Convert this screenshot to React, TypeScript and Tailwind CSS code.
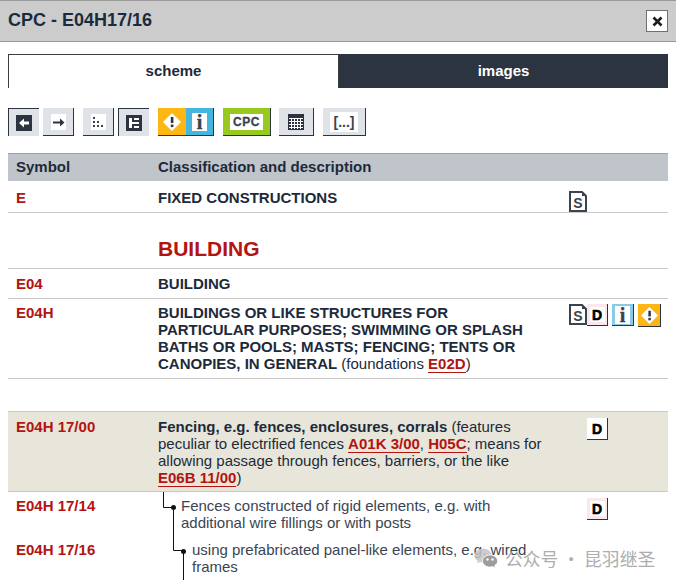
const font = "font-['Liberation_Sans',Arial,sans-serif]";

function ToolButton({ pressed, className, children }: { pressed?: boolean; className?: string; children: React.ReactNode }) {
  const edge = pressed
    ? 'border-t-[1.5px] border-l-[1.5px] border-t-[#2b3440] border-l-[#2b3440]'
    : 'pt-[1px] border-b-[1.5px] border-r-[1.5px] border-b-[#2b3440] border-r-[#2b3440]';
  return (
    <div className={`h-[28px] flex items-center justify-center bg-[#dfe2e6] ${edge} ${className ?? ''}`}>
      {children}
    </div>
  );
}

function Warning({ size = 18 }: { size?: number }) {
  return (
    <svg width={size} height={size} viewBox="0 0 18 18">
      <path d="M9 0 18 9 9 18 0 9Z" fill="#fff" />
      <rect x="7.8" y="4" width="2.6" height="6" fill="#2b3440" />
      <rect x="7.8" y="11.5" width="2.6" height="2.6" fill="#2b3440" />
    </svg>
  );
}

function InfoGlyph() {
  return (
    <span className="flex w-[15px] h-[18px] items-center justify-center bg-white text-[#3a434e] font-['Liberation_Serif',serif] font-bold text-[20px] leading-none [-webkit-text-stroke:0.4px_#3a434e]">
      i
    </span>
  );
}

function Toolbar() {
  return (
    <div className="flex mt-[20px] ml-[8px] h-[28px]">
      <ToolButton pressed className="w-[31px]">
        <svg width="16" height="16" viewBox="0 0 16 16">
          <rect width="16" height="16" fill="#2b3440" />
          <path d="M13 6.6H8V3.5L3 8 8 12.5V9.4H13Z" fill="#fff" />
        </svg>
      </ToolButton>
      <ToolButton className="w-[31px] ml-[4px]">
        <span className="flex w-[15px] h-[16px] items-center justify-center bg-white">
          <svg width="13" height="11" viewBox="0 0 13 11">
            <path d="M1 4.6H8V1.5L12.5 5.5 8 9.5V6.4H1Z" fill="#2b3440" />
          </svg>
        </span>
      </ToolButton>
      <ToolButton className="w-[31px] ml-[9px]">
        <span className="flex w-[15px] h-[16px] items-center justify-center bg-white">
          <svg width="12" height="12" viewBox="0 0 12 12" fill="#3a4450">
            <rect x="1" y="1" width="2" height="2" />
            <rect x="1" y="5" width="2" height="2" />
            <rect x="1" y="9" width="2" height="2" />
            <rect x="5" y="5" width="2" height="2" />
            <rect x="5" y="9" width="2" height="2" />
            <rect x="9" y="9" width="2" height="2" />
          </svg>
        </span>
      </ToolButton>
      <ToolButton pressed className="w-[31px] ml-[4px]">
        <svg width="16" height="16" viewBox="0 0 16 16">
          <rect width="16" height="16" fill="#2b3440" />
          <path d="M3 3H6V7H13V9H6V13H3Z" fill="#fff" />
          <rect x="8" y="3" width="5" height="2" fill="#fff" />
          <rect x="8" y="11" width="5" height="2" fill="#fff" />
        </svg>
      </ToolButton>
      <div className="flex ml-[9px] h-[28px] border-b-[1.5px] border-b-[#2b3440]">
        <span className="flex w-[28px] items-center justify-center bg-[#fdb714]">
          <Warning />
        </span>
        <span className="flex w-[28px] items-center justify-center bg-[#45b5de] border-r-[1.5px] border-r-[#2b3440]">
          <InfoGlyph />
        </span>
      </div>
      <div className="flex ml-[9px] w-[48px] h-[28px] pt-[1px] items-center justify-center bg-[#97c91f] border-b-[1.5px] border-r-[1.5px] border-b-[#2b3440] border-r-[#2b3440]">
        <span className="flex w-[33px] h-[16px] items-center justify-center bg-white text-[#3a4450] font-bold text-[12px] leading-none tracking-[0.6px] [-webkit-text-stroke:0.3px_#3a4450]">
          CPC
        </span>
      </div>
      <ToolButton className="w-[35px] ml-[8px]">
        <svg width="16" height="16" viewBox="0 0 16 16">
          <rect width="16" height="16" fill="#2b3440" />
          <path d="M1 4.5H15M1 7.5H15M1 10.5H15M1 13.5H15M3.5 4V15M6.5 4V15M9.5 4V15M12.5 4V15" stroke="#fff" strokeWidth="1" />
        </svg>
      </ToolButton>
      <ToolButton className="w-[43px] ml-[9px]">
        <span className="flex w-[28px] h-[20px] items-center justify-center bg-white text-[#3a4450] font-bold text-[14px] leading-none">
          [...]
        </span>
      </ToolButton>
    </div>
  );
}

function SheetIcon() {
  return (
    <span className="relative flex w-[18px] h-[21px] items-center justify-center">
      <svg className="absolute inset-0" width="18" height="21" viewBox="0 0 18 21">
        <path d="M1 1H13L17 5V20H1Z" fill="#fff" stroke="#3a434e" strokeWidth="2" />
        <path d="M13 1V5H17Z" fill="#3a434e" />
      </svg>
      <span className="relative mt-[3px] text-[#3a434e] font-bold text-[14px] leading-none">S</span>
    </span>
  );
}

function DocIcon({ pink }: { pink?: boolean }) {
  return (
    <span className={`flex w-[21px] h-[22px] items-center justify-center border-b-[1.5px] border-r-[1.5px] border-b-[#2b3440] border-r-[#2b3440] ${pink ? 'bg-[#fbe8ec]' : 'bg-white'}`}>
      <span className="flex w-[15px] h-[15px] items-center justify-center bg-white text-black font-bold text-[14px] leading-none [-webkit-text-stroke:0.6px_black]">D</span>
    </span>
  );
}

function Link({ children }: { children: React.ReactNode }) {
  return <span className="font-bold text-[#b3140f] border-b border-[#b3140f]">{children}</span>;
}

function Row({
  symbol,
  className,
  icons,
  children,
}: {
  symbol?: string;
  className?: string;
  icons?: React.ReactNode;
  children?: React.ReactNode;
}) {
  return (
    <div className={`flex ${className ?? ''}`}>
      <div className="w-[150px] pl-[8px] font-bold text-[#b3140f]">{symbol}</div>
      <div className="w-[411px] pr-[21px]">{children}</div>
      <div className="flex items-start">{icons}</div>
    </div>
  );
}

export default function App() {
  return (
    <div className={`${font} relative w-[676px] h-[586px] overflow-hidden bg-white text-[15px] leading-[17px] text-[#1d2a3a]`}>
      <div className="flex h-[42px] items-center justify-between bg-[#cccccc] border-t border-b border-[#9a9a9a] pl-[8px] pr-[8px]">
        <span className="text-[18px] font-bold text-[#1a2b40] mb-[2px]">CPC - E04H17/16</span>
        <span className="flex w-[22px] h-[22px] items-center justify-center bg-white border border-[#6f6f6f]">
          <svg width="11" height="11" viewBox="0 0 11 11">
            <path d="M1.5 1.5 9.5 9.5M9.5 1.5 1.5 9.5" stroke="#1d1d1d" strokeWidth="2.6" />
          </svg>
        </span>
      </div>

      <div className="flex mt-[12px] mx-[8px] h-[34px] font-bold">
        <div className="flex w-[331px] pb-[2px] items-center justify-center bg-white border-t border-l border-r border-[#3a3f46]">scheme</div>
        <div className="flex flex-1 pb-[2px] items-center justify-center bg-[#2b3440] text-white">images</div>
      </div>

      <Toolbar />

      <div className="mx-[8px] mt-[17px]">
        <div className="flex h-[28px] pb-[2px] items-center bg-[#bfc5cb] border-t border-[#9aa1a8] font-bold">
          <div className="w-[150px] pl-[8px]">Symbol</div>
          <div>Classification and description</div>
        </div>

        <Row
          symbol="E"
          className="h-[32px] pt-[8px] border-b border-[#c9c9c9]"
          icons={<span className="mt-[2px]"><SheetIcon /></span>}
        >
          <span className="font-bold">FIXED CONSTRUCTIONS</span>
        </Row>

        <Row className="h-[56px] pt-[24px] border-b border-[#c9c9c9]">
          <span className="block text-[21px] leading-[24px] font-bold text-[#b3140f]">BUILDING</span>
        </Row>

        <Row symbol="E04" className="h-[30px] pt-[6px] border-b border-[#c9c9c9]">
          <span className="font-bold">BUILDING</span>
        </Row>

        <Row
          symbol="E04H"
          className="h-[80px] pt-[5px] border-b border-[#c9c9c9]"
          icons={
            <>
              <SheetIcon />
              <DocIcon pink />
              <span className="flex w-[22px] h-[22px] ml-[4px] items-center justify-center bg-[#8ccbe8] border-b-[1.5px] border-r-[1.5px] border-b-[#2b3440] border-r-[#2b3440]">
                <InfoGlyph />
              </span>
              <span className="flex w-[23px] h-[23px] ml-[4px] items-center justify-center bg-[#fdb714] border-b-[1.5px] border-r-[1.5px] border-b-[#2b3440] border-r-[#2b3440]">
                <Warning size={17} />
              </span>
            </>
          }
        >
          <span className="font-bold">
            BUILDINGS OR LIKE STRUCTURES FOR PARTICULAR PURPOSES; SWIMMING OR SPLASH BATHS OR POOLS; MASTS; FENCING; TENTS OR CANOPIES, IN GENERAL
          </span>{' '}
          (foundations <Link>E02D</Link>)
        </Row>

        <div className="h-[32px]" />

        <Row
          symbol="E04H 17/00"
          className="h-[81px] pt-[6px] bg-[#e8e6da] border-t border-b border-[#c9c9c9]"
          icons={<span className="ml-[18px]"><DocIcon /></span>}
        >
          <span className="font-bold">Fencing, e.g. fences, enclosures, corrals</span> (features peculiar to electrified fences{' '}
          <Link>A01K 3/00</Link>, <Link>H05C</Link>; means for allowing passage through fences, barriers, or the like{' '}
          <Link>E06B 11/00</Link>)
        </Row>

        <div className="relative">
          <svg className="absolute left-[150px] top-0" width="40" height="90" viewBox="0 0 40 90" fill="none" stroke="#111">
            <path d="M5.5 0V15.5H14.5M15.5 15V58.5H24.5M25.5 59V88" />
            <circle cx="15.5" cy="15.5" r="2.5" fill="#111" stroke="none" />
            <circle cx="25.5" cy="59.5" r="2.5" fill="#111" stroke="none" />
          </svg>
          <Row
            symbol="E04H 17/14"
            className="h-[44px] pt-[5px]"
            icons={<span className="mt-[1px] ml-[18px]"><DocIcon pink /></span>}
          >
            <div className="pl-[23px] text-[#3a4552]">Fences constructed of rigid elements, e.g. with additional wire fillings or with posts</div>
          </Row>
          <Row symbol="E04H 17/16" className="h-[44px] pt-[5px]">
            <div className="pl-[34px] text-[#3a4552]">using prefabricated panel-like elements, e.g. wired frames</div>
          </Row>
        </div>
      </div>

      {/* watermark */}
      <div className="absolute left-[474px] top-[547px] flex items-center gap-[7px] text-[#adadad] font-['Noto_Sans_CJK_SC',sans-serif] text-[17.8px] leading-[22px]">
        <svg width="24" height="20" viewBox="0 0 24 20">
          <path d="M9 0.5C4.3 0.5 0.5 3.6 0.5 7.5 0.5 9.8 1.8 11.7 3.8 13L3 15.5 6 14C7 14.3 8 14.5 9 14.5 13.7 14.5 17.5 11.4 17.5 7.5 17.5 3.6 13.7 0.5 9 0.5Z" fill="#c4c4c4" fillOpacity="0.85" />
          <path d="M16 7C11.9 7 8.5 9.7 8.5 13 8.5 16.3 11.9 19 16 19 17 19 17.8 18.8 18.6 18.6L21.5 20 20.8 17.4C22.6 16.3 23.6 14.8 23.6 13 23.6 9.7 20.1 7 16 7Z" fill="#9c9c9c" stroke="#fff" strokeWidth="0.8" />
          <circle cx="13.5" cy="11.5" r="1.2" fill="#fff" />
          <circle cx="18.5" cy="11.5" r="1.2" fill="#fff" />
        </svg>
        <span>公众号 · 昆羽继圣</span>
      </div>
    </div>
  );
}
